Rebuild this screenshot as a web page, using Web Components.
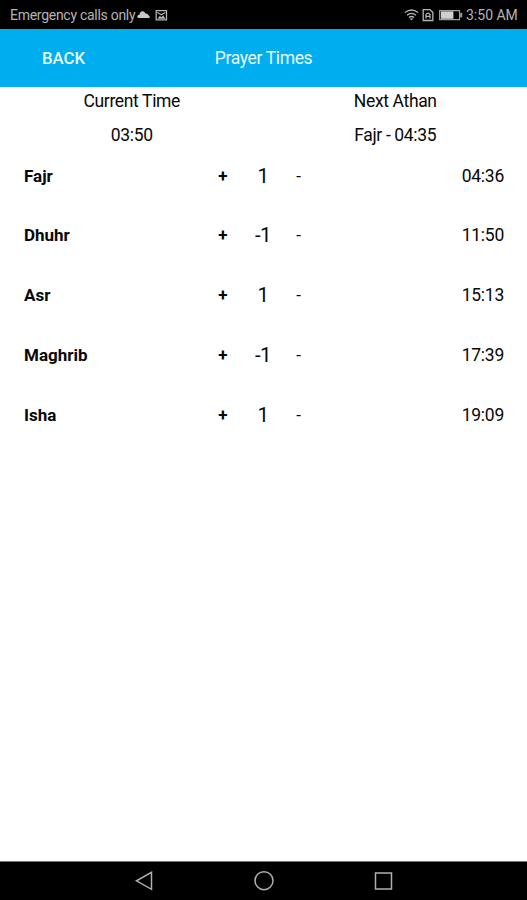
<!DOCTYPE html>
<html lang="en">
<head>
<meta charset="utf-8">
<title>Prayer Times</title>
<style>
    html, body {
        margin: 0;
        height: 100%;
        overflow: hidden;
        background: #fff;
        font-family: Roboto, "Liberation Sans", sans-serif;
    }
</style>
</head>
<body>
<prayer-app></prayer-app>

<script>
// Every component renders its own markup and styles into an open shadow root
class BaseComponent extends HTMLElement {
    render(html) {
        const template = document.createElement('template');
        template.innerHTML = html;
        this.attachShadow({ mode: 'open' }).appendChild(template.content.cloneNode(true));
    }
}

// Android status bar
class StatusBar extends BaseComponent {
    constructor() {
        super();
        this.render(`
            <style>
                :host {
                    display: flex;
                    justify-content: space-between;
                    align-items: center;
                    height: 29px;
                    box-sizing: border-box;
                    padding: 1px 9px 0 10px;
                    background: #000;
                    color: #b4b4b4;
                    font-size: 14px;
                    line-height: 16px;
                    white-space: nowrap;
                }

                .group {
                    display: flex;
                    align-items: center;
                }

                .carrier {
                    width: 126px;
                    letter-spacing: -0.28px;
                }

                .clock {
                    width: 52px;
                }

                svg {
                    display: block;
                }
            </style>
            <div class="group">
                <span class="carrier">Emergency calls only</span>
                <svg width="34" height="14" viewBox="0 0 34 14">
                    <path d="M2.2 10Q.8 9.6 1.4 8Q2 6.8 3.4 6.8Q4 3 6.8 3.3Q8.8 3.7 9.5 5.6Q11.8 5.4 12.6 7.2Q14.5 8.2 13.5 10Z" fill="#c8c8c8"/>
                    <path d="M20.2 2.6h10.3v9.2H20.2z" fill="none" stroke="#b4b4b4" stroke-width="1.3"/>
                    <path d="M21.5 10.8L23.6 8l1.8 1L27.3 7.5 29.5 10.8z" fill="#b4b4b4"/>
                    <path d="M21.5 4.5l3.8 2.2L29.3 4.5" fill="none" stroke="#b4b4b4" stroke-width="1.2"/>
                </svg>
            </div>
            <div class="group">
                <svg width="62" height="14" viewBox="0 0 62 14">
                    <g fill="none" stroke="#b4b4b4" stroke-width="1.3">
                        <path d="M1 4.6Q7.5-.6 14 4.6M3 7.2Q7.5 3.4 12 7.2M5 9.6Q7.5 7.4 10 9.6"/>
                        <path d="M19.2 1.6h6.6l3 2.8v8.1h-9.6z"/>
                        <path d="M22 10.5V6.6Q24 3.6 26 6.6v3.9M22 8.4h4"/>
                    </g>
                    <path d="M5.7 10.5h3.6L7.5 12.6z" fill="#b4b4b4"/>
                    <path d="M35.6 2.6h19.9v9H35.6z" fill="none" stroke="#a0a0a0" stroke-width="1.1"/>
                    <path d="M36.8 3.4h12.6v7.4H36.8z" fill="#d0d0d0"/>
                    <path d="M56.2 4.8h2v4.6h-2z" fill="#a0a0a0"/>
                </svg>
                <span class="clock">3:50 AM</span>
            </div>
        `);
    }
}

// Blue title bar with the back button
class AppHeader extends BaseComponent {
    constructor() {
        super();
        this.render(`
            <style>
                :host {
                    display: grid;
                    grid-template-columns: 1fr auto 1fr;
                    align-items: center;
                    height: 58px;
                    background: #00adef;
                    color: #e9fbff;
                    font-size: 17.5px;
                    letter-spacing: -0.35px;
                }

                button {
                    justify-self: start;
                    margin: 0 0 0 42px;
                    padding: 0;
                    border: 0;
                    background: none;
                    color: inherit;
                    font: 500 16.8px Roboto, sans-serif;
                }
            </style>
            <button><slot name="back"></slot></button>
            <slot></slot>
        `);
    }
}

// Label above a value, used for the two columns at the top
class TimeSummary extends BaseComponent {
    constructor() {
        super();
        this.render(`
            <style>
                :host {
                    display: flex;
                    flex-direction: column;
                    align-items: center;
                    gap: 14px;
                    flex: 1;
                    font-size: 17.5px;
                    letter-spacing: -0.35px;
                    line-height: 20px;
                }
            </style>
            <slot name="label"></slot>
            <slot></slot>
        `);
    }
}

// One prayer with its minute adjustment and time
class PrayerRow extends BaseComponent {
    constructor() {
        super();
        this.render(`
            <style>
                :host {
                    display: grid;
                    grid-template-columns: 194px 86px 1fr;
                    align-items: center;
                    height: 59.75px;
                    padding: 0 23px 0 24px;
                    font-size: 17.5px;
                    letter-spacing: -0.25px;
                }

                .name {
                    font-weight: 700;
                    font-size: 17px;
                    letter-spacing: 0;
                }

                .stepper {
                    display: grid;
                    grid-template-columns: 10px 1fr 11px;
                    align-items: center;
                    justify-items: center;
                }

                button {
                    padding: 0;
                    border: 0;
                    background: none;
                    color: inherit;
                    font: 700 17px Roboto, sans-serif;
                }

                .minus {
                    font-weight: 400;
                }

                .offset {
                    padding-left: 5px;
                    font-size: 20.5px;
                    letter-spacing: -0.5px;
                }

                .time {
                    justify-self: end;
                }
            </style>
            <span class="name"><slot></slot></span>
            <div class="stepper">
                <button class="plus">+</button>
                <span class="offset"></span>
                <button class="minus">-</button>
            </div>
            <span class="time"></span>
        `);
    }

    connectedCallback() {
        this.shadowRoot.querySelector('.offset').textContent = this.getAttribute('offset');
        this.shadowRoot.querySelector('.time').textContent = this.getAttribute('time');
    }
}

// Android navigation bar
class NavBar extends BaseComponent {
    constructor() {
        super();
        this.render(`
            <style>
                :host {
                    display: flex;
                    justify-content: center;
                    align-items: center;
                    gap: 98px;
                    height: 39px;
                    background: #000;
                    box-sizing: border-box;
                    border-top: 1px solid #777;
                }

                svg {
                    width: 22px;
                    height: 22px;
                    fill: none;
                    stroke: #b0b0b0;
                    stroke-width: 1.5;
                }
            </style>
            <svg viewBox="0 0 22 22"><path d="M18.5 2.3v17L3.5 10.8z"/></svg>
            <svg viewBox="0 0 22 22"><circle cx="11" cy="10.7" r="9"/></svg>
            <svg viewBox="0 0 22 22"><rect x="2.5" y="3" width="16" height="16"/></svg>
        `);
    }
}

class PrayerApp extends BaseComponent {
    constructor() {
        super();
        this.render(`
            <style>
                :host {
                    display: flex;
                    flex-direction: column;
                    height: 100vh;
                    background: #fff;
                    color: #080808;
                }

                main {
                    flex: 1;
                }

                .summary {
                    display: flex;
                    padding: 4px 0 0.8px;
                }
            </style>
            <status-bar></status-bar>
            <app-header><span slot="back">BACK</span>Prayer Times</app-header>
            <main>
                <div class="summary">
                    <time-summary><span slot="label">Current Time</span>03:50</time-summary>
                    <time-summary><span slot="label">Next Athan</span>Fajr - 04:35</time-summary>
                </div>
                <prayer-row offset="1" time="04:36">Fajr</prayer-row>
                <prayer-row offset="-1" time="11:50">Dhuhr</prayer-row>
                <prayer-row offset="1" time="15:13">Asr</prayer-row>
                <prayer-row offset="-1" time="17:39">Maghrib</prayer-row>
                <prayer-row offset="1" time="19:09">Isha</prayer-row>
            </main>
            <nav-bar></nav-bar>
        `);
    }
}

customElements.define('status-bar', StatusBar);
customElements.define('app-header', AppHeader);
customElements.define('time-summary', TimeSummary);
customElements.define('prayer-row', PrayerRow);
customElements.define('nav-bar', NavBar);
customElements.define('prayer-app', PrayerApp);
</script>
</body>
</html>
